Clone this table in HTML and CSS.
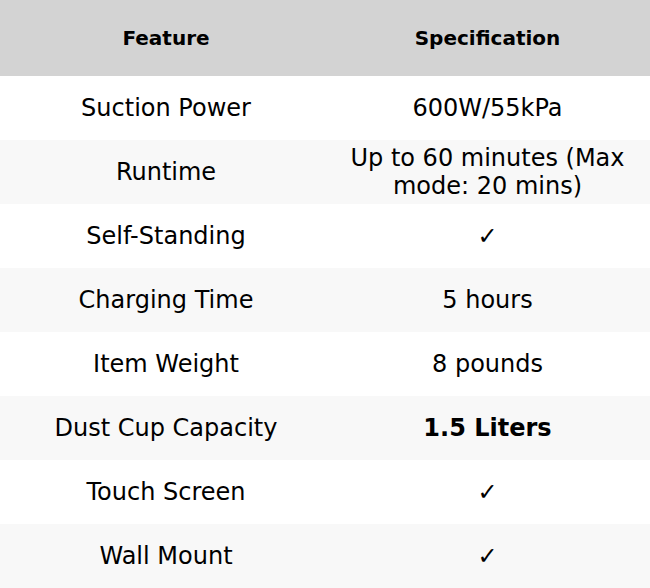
FILE: index.html
```html
<!DOCTYPE html>
<html>
<head>
<meta charset="utf-8">
<link rel="stylesheet" href="styles.css">
</head>
<body>
<table class="spec-table">
  <colgroup><col class="col-feature"><col class="col-spec"></colgroup>
  <thead>
    <tr><th>Feature</th><th>Specification</th></tr>
  </thead>
  <tbody>
    <tr><td>Suction Power</td><td>600W/55kPa</td></tr>
    <tr><td>Runtime</td><td>Up to 60 minutes (Max mode: 20 mins)</td></tr>
    <tr><td>Self-Standing</td><td>✓</td></tr>
    <tr><td>Charging Time</td><td>5 hours</td></tr>
    <tr><td>Item Weight</td><td>8 pounds</td></tr>
    <tr><td>Dust Cup Capacity</td><td><strong>1.5 Liters</strong></td></tr>
    <tr><td>Touch Screen</td><td>✓</td></tr>
    <tr><td>Wall Mount</td><td>✓</td></tr>
  </tbody>
</table>
</body>
</html>
```
FILE: styles.css
```css
html, body {
  margin: 0;
  padding: 0;
  background: #ffffff;
}
.spec-table {
  width: 650px;
  table-layout: fixed;
  border-collapse: collapse;
  font-family: "DejaVu Sans", sans-serif;
  color: #000;
}
.col-feature, .col-spec {
  width: 50%;
}
.spec-table th {
  background: #d3d3d3;
  height: 76px;
  padding: 0 12px;
  font-size: 20px;
  font-weight: bold;
  text-align: center;
}
.spec-table td {
  height: 64px;
  padding: 0 12px;
  font-size: 24px;
  text-align: center;
}
.spec-table th:first-child,
.spec-table td:first-child {
  padding-left: 19px;
}
.spec-table tbody tr:nth-child(even) td {
  background: #f8f8f8;
}
```
